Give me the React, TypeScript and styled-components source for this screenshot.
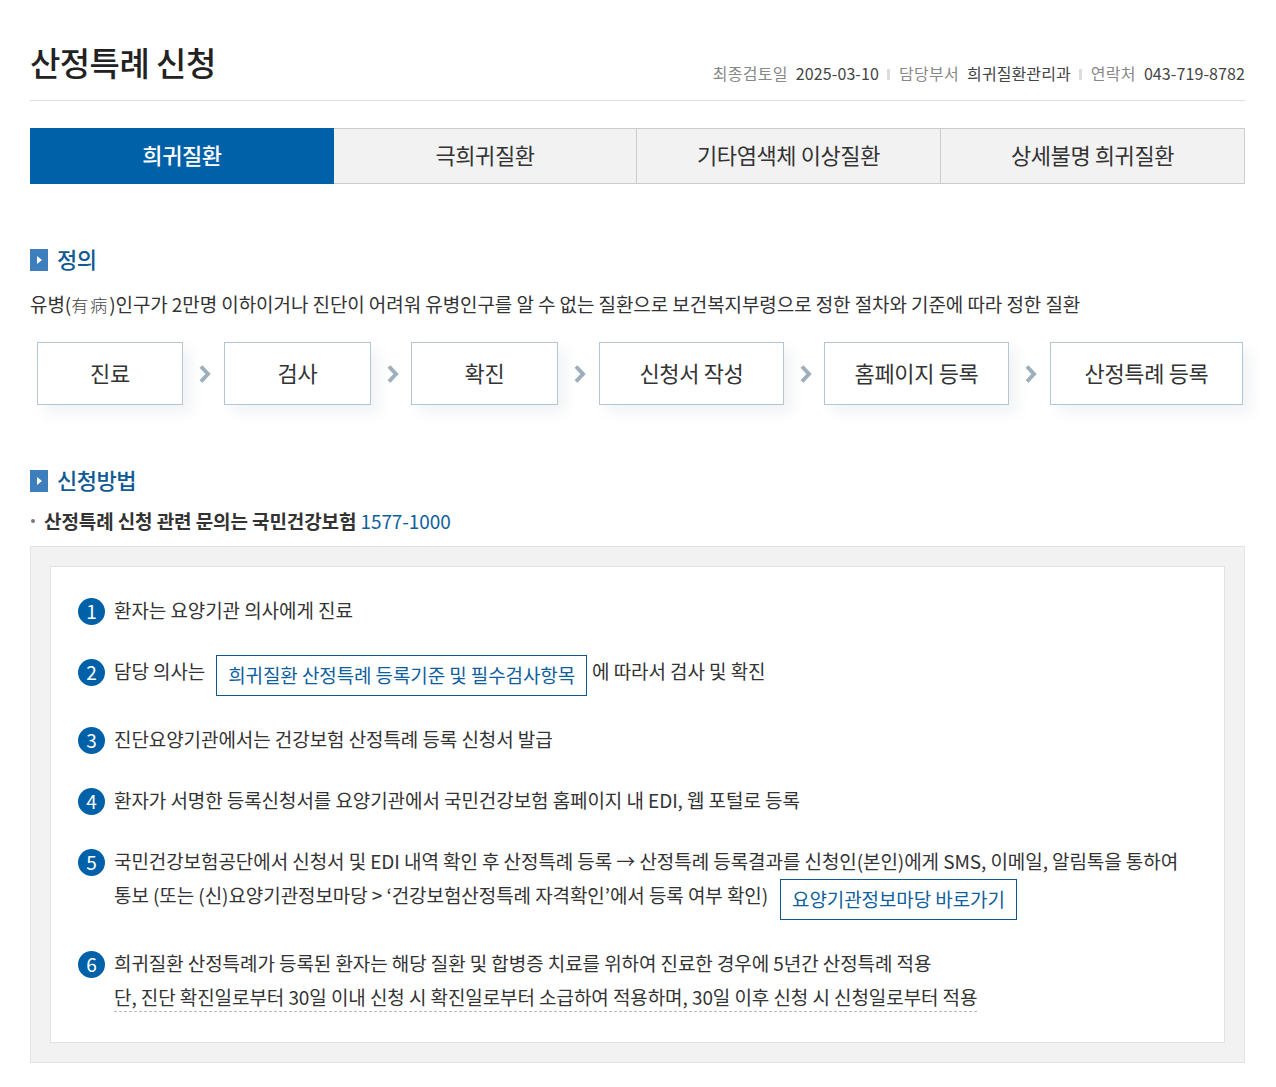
import React from 'react'
import styled, { createGlobalStyle } from 'styled-components'

const GlobalStyle = createGlobalStyle`
  html, body {
    margin: 0;
    padding: 0;
    background: #fff;
  }
  body {
    font-family: "Noto Sans CJK KR", "Noto Sans", sans-serif;
    color: #333;
  }
  * {
    box-sizing: border-box;
  }
`

const Page = styled.div`
  width: 1276px;
  padding: 0 31px 24px 30px;
`

const Header = styled.header`
  height: 101px;
  padding-top: 37px;
  display: flex;
  justify-content: space-between;
  align-items: flex-start;
  border-bottom: 1px solid #ddd;
`

const Title = styled.h1`
  margin: 0;
  font-size: 33px;
  line-height: 50px;
  font-weight: 500;
  letter-spacing: -0.55px;
  color: #222;
`

const Meta = styled.dl`
  margin: 0;
  padding-top: 24px;
  display: flex;
  align-items: center;
  font-size: 16px;
  line-height: 24px;
  letter-spacing: 0.1px;
`

const MetaLabel = styled.dt`
  color: #888;
  margin-right: 8px;
  letter-spacing: 0.3px;
`

const MetaValue = styled.dd`
  margin: 0;
  color: #444;

  &:not(:last-child)::after {
    content: '';
    display: inline-block;
    width: 3px;
    height: 11px;
    margin: 0 8.5px;
    background: #ddd;
  }
`

const Tabs = styled.nav`
  margin-top: 27px;
  display: grid;
  grid-template-columns: 304px 303px 304px 304px;
  height: 56px;
`

const Tab = styled.a<{ $active?: boolean }>`
  display: flex;
  align-items: center;
  justify-content: center;
  padding-bottom: 4px;
  font-size: 22px;
  letter-spacing: -0.4px;
  font-weight: ${p => (p.$active ? 500 : 400)};
  color: ${p => (p.$active ? '#fff' : '#333')};
  background: ${p => (p.$active ? '#0061a9' : '#f2f2f2')};
  border: 1px solid ${p => (p.$active ? '#0061a9' : '#ccc')};
  border-left-width: ${p => (p.$active ? '1px' : '0')};

  &:last-child {
    border-right: 1px solid #ccc;
  }
`

const SectionTitle = styled.h2<{ $top: number }>`
  margin: ${p => p.$top}px 0 0;
  display: flex;
  align-items: center;
  gap: 9px;
  height: 32px;
  font-size: 22px;
  font-weight: 500;
  letter-spacing: -0.5px;
  color: #0f5a94;
`

const SectionText = styled.span`
  margin-bottom: 4px;
`

const SectionMark = styled.span`
  width: 18px;
  height: 22px;
  background: #3d7ebd;
  display: flex;
  align-items: center;
  justify-content: center;

  &::before {
    content: '';
    border-left: 5px solid #fff;
    border-top: 4px solid transparent;
    border-bottom: 4px solid transparent;
  }
`

const Definition = styled.p`
  margin: 14px 0 0;
  font-size: 19px;
  line-height: 28px;
  letter-spacing: -0.08px;
  color: #333;
`

const Hanja = styled.span`
  font-family: "Noto Sans CJK TC", serif;
  font-weight: 300;
  font-size: 17px;
  letter-spacing: 2px;
  color: #444;
`

const Steps = styled.div`
  margin-top: 23px;
  padding-left: 7px;
  display: flex;
  align-items: stretch;
  height: 63px;
`

const Step = styled.div<{ $width: number }>`
  width: ${p => p.$width}px;
  padding-bottom: 4px;
  display: flex;
  align-items: center;
  justify-content: center;
  font-size: 22px;
  letter-spacing: -0.35px;
  color: #333;
  background: #fff;
  border: 1px solid #b4c6d6;
  box-shadow: 8px 8px 12px rgba(120, 140, 160, 0.1);
`

const StepArrow = styled.div<{ $width: number }>`
  width: ${p => p.$width}px;
  padding-left: 3px;
  display: flex;
  align-items: center;
  justify-content: center;
`

const Notice = styled.p`
  margin: 10px 0 0;
  padding-left: 14px;
  position: relative;
  font-size: 19px;
  line-height: 28px;
  letter-spacing: -0.1px;
  font-weight: 700;
  color: #333;

  &::before {
    content: '';
    position: absolute;
    left: 1px;
    top: 12px;
    width: 4px;
    height: 4px;
    border-radius: 50%;
    background: #777;
  }
`

const Phone = styled.span`
  font-weight: 400;
  color: #0f5f9e;
  letter-spacing: -0.1px;
`

const OuterBox = styled.div`
  margin-top: 11px;
  padding: 19px;
  background: #f2f2f2;
  border: 1px solid #e3e3e3;
`

const InnerBox = styled.div`
  background: #fff;
  border: 1px solid #e3e3e3;
  padding: 27px 27px 13px;
`

const List = styled.ol`
  margin: 0;
  padding: 0;
  list-style: none;
  display: flex;
  flex-direction: column;
`

const Item = styled.li<{ $gap: number }>`
  display: flex;
  gap: 9px;
  margin-bottom: ${p => p.$gap}px;
  font-size: 19px;
  line-height: 34px;
  letter-spacing: -0.075px;
  color: #333;
`

const ItemBody = styled.div`
  margin: -1px 0 1px;
`

const Badge = styled.span`
  flex: none;
  width: 27px;
  height: 27px;
  margin-top: 4px;
  padding-bottom: 2px;
  border-radius: 50%;
  background: #0061a9;
  color: #fff;
  display: flex;
  align-items: center;
  justify-content: center;
  font-size: 19px;
  font-weight: 400;
  letter-spacing: 0;
`

const LinkButton = styled.a<{ $left: number }>`
  display: inline-block;
  height: 41px;
  margin: 0 5px 0 ${p => p.$left}px;
  padding: 0 11px;
  vertical-align: -4px;
  font-size: 19px;
  line-height: 37px;
  letter-spacing: -0.1px;
  color: #0f5f9e;
  border: 1px solid #0f5a8a;
`

const Dotted = styled.span`
  border-bottom: 1px dashed #bbb;
  padding-bottom: 1px;
`

const Arrow = () => (
  <svg width="14" height="20" viewBox="0 0 14 20" fill="none">
    <path d="M3 2.5 L10 10 L3 17.5" stroke="#9dafbd" strokeWidth="4" />
  </svg>
)

const stepList = [
  { label: '진료', width: 146, after: 41 },
  { label: '검사', width: 147, after: 40 },
  { label: '확진', width: 147, after: 41 },
  { label: '신청서 작성', width: 185, after: 40 },
  { label: '홈페이지 등록', width: 185, after: 41 },
  { label: '산정특례 등록', width: 193, after: 0 },
]

function App() {
  return (
    <Page>
      <GlobalStyle />
      <Header>
        <Title>산정특례 신청</Title>
        <Meta>
          <MetaLabel>최종검토일</MetaLabel>
          <MetaValue>2025-03-10</MetaValue>
          <MetaLabel>담당부서</MetaLabel>
          <MetaValue>희귀질환관리과</MetaValue>
          <MetaLabel>연락처</MetaLabel>
          <MetaValue>043-719-8782</MetaValue>
        </Meta>
      </Header>

      <Tabs>
        <Tab $active>희귀질환</Tab>
        <Tab>극희귀질환</Tab>
        <Tab>기타염색체 이상질환</Tab>
        <Tab>상세불명 희귀질환</Tab>
      </Tabs>

      <SectionTitle $top={60}>
        <SectionMark />
        <SectionText>정의</SectionText>
      </SectionTitle>
      <Definition>
        유병(<Hanja>有病</Hanja>)인구가 2만명 이하이거나 진단이 어려워 유병인구를 알 수 없는 질환으로 보건복지부령으로 정한 절차와 기준에 따라 정한 질환
      </Definition>
      <Steps>
        {stepList.map(step => (
          <React.Fragment key={step.label}>
            <Step $width={step.width}>{step.label}</Step>
            {step.after > 0 && (
              <StepArrow $width={step.after}>
                <Arrow />
              </StepArrow>
            )}
          </React.Fragment>
        ))}
      </Steps>

      <SectionTitle $top={60}>
        <SectionMark />
        <SectionText>신청방법</SectionText>
      </SectionTitle>
      <Notice>
        산정특례 신청 관련 문의는 국민건강보험 <Phone>1577-1000</Phone>
      </Notice>
      <OuterBox>
        <InnerBox>
          <List>
            <Item $gap={27}>
              <Badge>1</Badge>
              <ItemBody>환자는 요양기관 의사에게 진료</ItemBody>
            </Item>
            <Item $gap={26}>
              <Badge>2</Badge>
              <ItemBody>
                담당 의사는<LinkButton $left={11}>희귀질환 산정특례 등록기준 및 필수검사항목</LinkButton>에 따라서 검사 및 확진
              </ItemBody>
            </Item>
            <Item $gap={27}>
              <Badge>3</Badge>
              <ItemBody>진단요양기관에서는 건강보험 산정특례 등록 신청서 발급</ItemBody>
            </Item>
            <Item $gap={27}>
              <Badge>4</Badge>
              <ItemBody>환자가 서명한 등록신청서를 요양기관에서 국민건강보험 홈페이지 내 EDI, 웹 포털로 등록</ItemBody>
            </Item>
            <Item $gap={26}>
              <Badge>5</Badge>
              <ItemBody>
                국민건강보험공단에서 신청서 및 EDI 내역 확인 후 산정특례 등록 → 산정특례 등록결과를 신청인(본인)에게 SMS, 이메일, 알림톡을 통하여
                <br />
                통보 (또는 (신)요양기관정보마당 &gt; ‘건강보험산정특례 자격확인’에서 등록 여부 확인)
                <LinkButton $left={12}>요양기관정보마당 바로가기</LinkButton>
              </ItemBody>
            </Item>
            <Item $gap={14}>
              <Badge>6</Badge>
              <ItemBody>
                희귀질환 산정특례가 등록된 환자는 해당 질환 및 합병증 치료를 위하여 진료한 경우에 5년간 산정특례 적용
                <br />
                <Dotted>단, 진단 확진일로부터 30일 이내 신청 시 확진일로부터 소급하여 적용하며, 30일 이후 신청 시 신청일로부터 적용</Dotted>
              </ItemBody>
            </Item>
          </List>
        </InnerBox>
      </OuterBox>
    </Page>
  )
}

export default App
